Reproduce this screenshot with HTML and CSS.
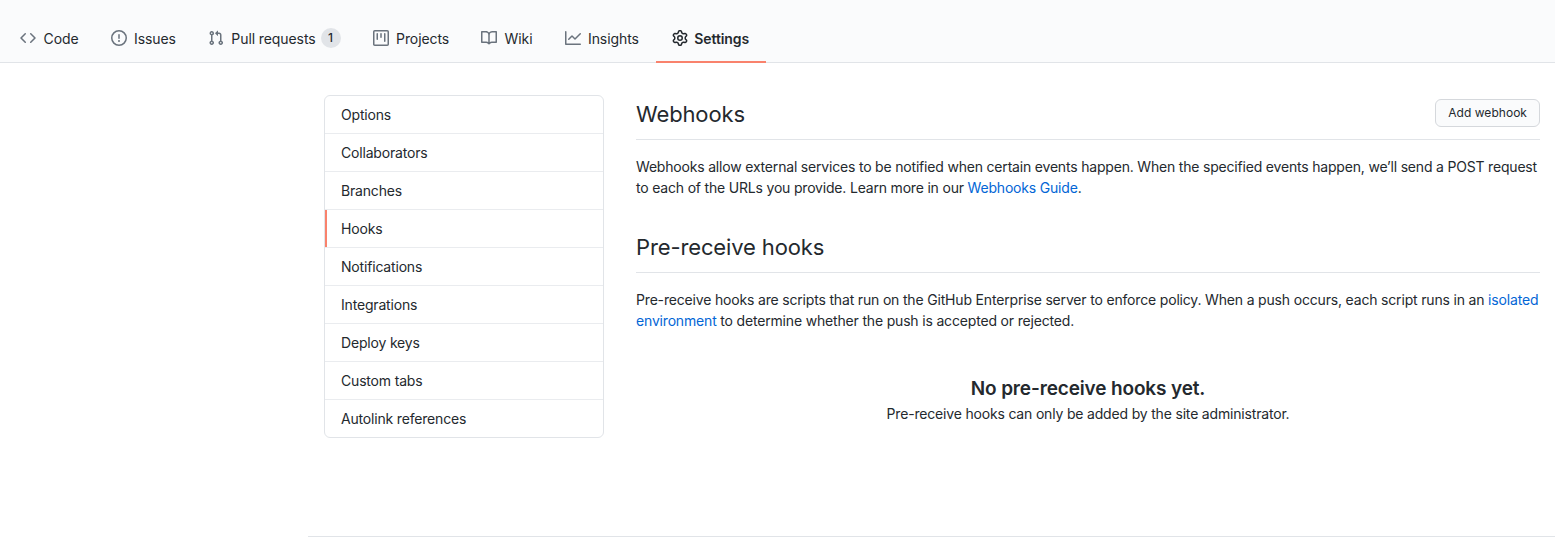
FILE: index.html
```html
<!DOCTYPE html>
<html lang="en">
<head>
<meta charset="utf-8">
<title>Hooks</title>
<link rel="stylesheet" href="styles.css">
</head>
<body>
<nav class="tabs">
  <a class="tab"><svg class="ico" viewBox="0 0 16 16"><path fill-rule="evenodd" d="M4.72 3.22a.75.75 0 011.06 1.06L2.06 8l3.72 3.72a.75.75 0 11-1.06 1.06L.47 8.53a.75.75 0 010-1.06l4.25-4.25zm6.56 0a.75.75 0 10-1.06 1.06L13.94 8l-3.72 3.72a.75.75 0 101.06 1.06l4.25-4.25a.75.75 0 000-1.06l-4.25-4.25z"/></svg>Code</a>
  <a class="tab"><svg class="ico" viewBox="0 0 16 16"><path fill-rule="evenodd" d="M8 1.5a6.5 6.5 0 100 13 6.5 6.5 0 000-13zM0 8a8 8 0 1116 0A8 8 0 010 8zm9 3a1 1 0 11-2 0 1 1 0 012 0zm-.25-6.25a.75.75 0 00-1.5 0v3.5a.75.75 0 001.5 0v-3.5z"/></svg>Issues</a>
  <a class="tab"><svg class="ico" viewBox="0 0 16 16"><path fill-rule="evenodd" d="M7.177 3.073L9.573.677A.25.25 0 0110 .854v4.792a.25.25 0 01-.427.177L7.177 3.427a.25.25 0 010-.354zM3.75 2.5a.75.75 0 100 1.5.75.75 0 000-1.5zm-2.25.75a2.25 2.25 0 113 2.122v5.256a2.251 2.251 0 11-1.5 0V5.372A2.25 2.25 0 011.5 3.25zM11 2.5h-1V4h1a1 1 0 011 1v5.628a2.251 2.251 0 101.5 0V5A2.5 2.5 0 0011 2.5zm1 10.25a.75.75 0 111.5 0 .75.75 0 01-1.5 0zM3.75 12a.75.75 0 100 1.5.75.75 0 000-1.5z"/></svg>Pull requests<span class="counter">1</span></a>
  <a class="tab"><svg class="ico" viewBox="0 0 16 16"><path fill-rule="evenodd" d="M1.75 0A1.75 1.75 0 000 1.75v12.5C0 15.216.784 16 1.75 16h12.5A1.75 1.75 0 0016 14.25V1.75A1.75 1.75 0 0014.25 0H1.75zM1.5 1.75a.25.25 0 01.25-.25h12.5a.25.25 0 01.25.25v12.5a.25.25 0 01-.25.25H1.75a.25.25 0 01-.25-.25V1.75zM11.75 3a.75.75 0 00-.75.75v7.5a.75.75 0 001.5 0v-7.5a.75.75 0 00-.75-.75zm-8.25.75a.75.75 0 011.5 0v5.5a.75.75 0 01-1.5 0v-5.5zM8 3a.75.75 0 00-.75.75v3.5a.75.75 0 001.5 0v-3.5A.75.75 0 008 3z"/></svg>Projects</a>
  <a class="tab"><svg class="ico" viewBox="0 0 16 16"><path fill-rule="evenodd" d="M0 1.75A.75.75 0 01.75 1h4.253c1.227 0 2.317.59 3 1.501A3.744 3.744 0 0111.006 1h4.245a.75.75 0 01.75.75v10.5a.75.75 0 01-.75.75h-4.507a2.25 2.25 0 00-1.591.659l-.622.621a.75.75 0 01-1.06 0l-.622-.621A2.25 2.25 0 005.258 13H.75a.75.75 0 01-.75-.75V1.75zm8.755 3a2.25 2.25 0 012.25-2.25H14.5v9h-3.757c-.71 0-1.4.201-1.992.572l.004-7.322zm-1.504 7.324l.004-5.073-.002-2.253A2.25 2.25 0 005.003 2.5H1.5v9h3.757a3.75 3.75 0 011.994.574z"/></svg>Wiki</a>
  <a class="tab"><svg class="ico" viewBox="0 0 16 16"><path fill-rule="evenodd" d="M1.5 1.75a.75.75 0 00-1.5 0v12.5c0 .414.336.75.75.75h14.5a.75.75 0 000-1.5H1.5V1.75zm14.28 2.53a.75.75 0 00-1.06-1.06L10 7.94 7.53 5.47a.75.75 0 00-1.06 0L3.22 8.72a.75.75 0 001.06 1.06L7 7.06l2.47 2.47a.75.75 0 001.06 0l5.25-5.25z"/></svg>Insights</a>
  <a class="tab tab-active"><svg class="ico" viewBox="0 0 16 16"><path fill-rule="evenodd" d="M7.429 1.525a6.593 6.593 0 011.142 0c.036.003.108.036.137.146l.289 1.105c.147.56.55.967.997 1.189.174.086.341.183.501.29.417.278.97.423 1.53.27l1.102-.303c.11-.03.175.016.195.046.219.31.41.641.573.989.014.031.022.11-.059.19l-.815.806c-.411.406-.562.957-.53 1.456a4.588 4.588 0 010 .582c-.032.499.119 1.05.53 1.456l.815.806c.08.08.073.159.059.19a6.494 6.494 0 01-.573.99c-.02.029-.086.074-.195.045l-1.103-.303c-.559-.153-1.112-.008-1.529.27-.16.107-.327.204-.5.29-.449.222-.851.628-.998 1.189l-.289 1.105c-.029.11-.101.143-.137.146a6.613 6.613 0 01-1.142 0c-.036-.003-.108-.037-.137-.146l-.289-1.105c-.147-.56-.55-.967-.997-1.189a4.502 4.502 0 01-.501-.29c-.417-.278-.97-.423-1.53-.27l-1.102.303c-.11.03-.175-.016-.195-.046a6.492 6.492 0 01-.573-.989c-.014-.031-.022-.11.059-.19l.815-.806c.411-.406.562-.957.53-1.456a4.587 4.587 0 010-.582c-.032-.499-.119-1.05-.53-1.456l-.815-.806c-.08-.08-.073-.159-.059-.19a6.44 6.44 0 01.573-.99c.02-.029.086-.075.195-.045l1.103.303c.559.153 1.112.008 1.529-.27.16-.107.327-.204.5-.29.449-.222.851-.628.998-1.189l.289-1.105c.029-.11.101-.143.137-.146zM8 0c-.236 0-.47.01-.701.03-.743.065-1.29.615-1.458 1.261l-.29 1.106c-.017.066-.078.158-.211.224a5.994 5.994 0 00-.668.386c-.123.082-.233.09-.3.071L3.27 2.776c-.644-.177-1.392.02-1.82.63a7.977 7.977 0 00-.704 1.217c-.315.675-.111 1.422.363 1.891l.815.806c.05.048.098.147.088.294a6.084 6.084 0 000 .772c.01.147-.038.246-.088.294l-.815.806c-.474.469-.678 1.216-.363 1.891.2.428.436.835.704 1.218.428.609 1.176.806 1.82.63l1.103-.303c.066-.019.176-.011.299.071.213.143.436.272.668.386.133.066.194.158.212.224l.289 1.106c.169.646.715 1.196 1.458 1.26a8.094 8.094 0 001.402 0c.743-.064 1.29-.614 1.458-1.26l.29-1.106c.017-.066.078-.158.211-.224a5.98 5.98 0 00.668-.386c.123-.082.233-.09.3-.071l1.102.302c.644.177 1.392-.02 1.82-.63.268-.382.505-.789.704-1.217.315-.675.111-1.422-.364-1.891l-.814-.806c-.05-.048-.098-.147-.088-.294a6.1 6.1 0 000-.772c-.01-.147.039-.246.088-.294l.814-.806c.475-.469.679-1.216.364-1.891a7.992 7.992 0 00-.704-1.218c-.428-.609-1.176-.806-1.82-.63l-1.103.303c-.066.019-.176.011-.299-.071a5.991 5.991 0 00-.668-.386c-.133-.066-.194-.158-.212-.224L10.16 1.29C9.99.645 9.444.095 8.701.031A8.094 8.094 0 008 0zm1.5 8a1.5 1.5 0 11-3 0 1.5 1.5 0 013 0zM11 8a3 3 0 11-6 0 3 3 0 016 0z"/></svg>Settings</a>
</nav>
<div class="page">
  <div class="layout">
    <aside class="menu">
      <a class="menu-item">Options</a>
      <a class="menu-item">Collaborators</a>
      <a class="menu-item">Branches</a>
      <a class="menu-item menu-item-active">Hooks</a>
      <a class="menu-item">Notifications</a>
      <a class="menu-item">Integrations</a>
      <a class="menu-item">Deploy keys</a>
      <a class="menu-item">Custom tabs</a>
      <a class="menu-item">Autolink references</a>
    </aside>
    <main class="content">
      <div class="subhead">
        <h2 class="subhead-title">Webhooks</h2>
        <button class="btn">Add webhook</button>
      </div>
      <p class="copy">Webhooks allow external services to be notified when certain events happen. When the specified events happen, we’ll send a POST request to each of the URLs you provide. Learn more in our <a class="link">Webhooks Guide</a>.</p>
      <div class="subhead subhead-second">
        <h2 class="subhead-title">Pre-receive hooks</h2>
      </div>
      <p class="copy copy-wide">Pre-receive hooks are scripts that run on the GitHub Enterprise server to enforce policy. When a push occurs, each script runs in an <a class="link">isolated environment</a> to determine whether the push is accepted or rejected.</p>
      <div class="blank">
        <h3 class="blank-title">No pre-receive hooks yet.</h3>
        <p class="blank-text">Pre-receive hooks can only be added by the site administrator.</p>
      </div>
    </main>
  </div>
  <footer class="foot"></footer>
</div>
</body>
</html>
```
FILE: styles.css
```css
* { box-sizing: border-box; }
html, body { margin: 0; height: 537px; overflow: hidden; }
body {
  font-family: Inter, "Liberation Sans", sans-serif;
  font-size: 14px;
  line-height: 21px;
  color: #24292e;
  background: #fff;
}
.tabs {
  display: flex;
  height: 63px;
  padding-left: 4px;
  background: #fafbfc;
  border-bottom: 1px solid #e1e4e8;
}
.tab {
  display: flex;
  align-items: center;
  height: 63px;
  padding: 15px 16px 0;
  color: #24292e;
  letter-spacing: -0.09px;
  border-bottom: 2px solid transparent;
  white-space: nowrap;
}
.ico { width: 16px; height: 16px; margin-right: 7.5px; fill: #6a737d; flex: none; }
.tab-active { margin-left: 1px; padding-right: 17px; font-weight: 600; border-bottom-color: #f9826c; }
.tab-active .ico { fill: #24292e; margin-right: 6.5px; }
.counter {
  display: inline-block;
  min-width: 20px;
  margin-left: 5px;
  padding: 0 6px;
  font-size: 12px;
  font-weight: 500;
  line-height: 20px;
  text-align: center;
  background: #e1e4e8;
  border-radius: 10px;
}
.page { margin-left: 308px; height: 474px; display: flex; flex-direction: column; justify-content: space-between; }
.layout { display: flex; gap: 32px; padding: 32px 15px 0 16px; }
.menu {
  width: 280px;
  flex: none;
  border: 1px solid #e1e4e8;
  border-radius: 6px;
  overflow: hidden;
  align-self: flex-start;
}
.menu-item {
  display: block;
  height: 38px;
  padding: 8px 16px;
  border-top: 1px solid #eaecef;
  color: #24292e;
  letter-spacing: -0.18px;
}
.menu-item:first-child { height: 37px; border-top: 0; }
.menu-item-active { box-shadow: inset 2px 0 0 #f9826c; }
.content { flex: 1; min-width: 0; }
.subhead {
  display: flex;
  justify-content: space-between;
  align-items: center;
  height: 45px;
  padding-bottom: 6px;
  border-bottom: 1px solid #e1e4e8;
  margin-bottom: 16px;
}
.subhead-second { margin-top: 30px; }
.subhead-title { margin: 0; font-size: 22px; font-weight: 400; line-height: 36px; letter-spacing: -0.13px; }
.btn {
  font: 400 12px/20px Inter, "Liberation Sans", sans-serif;
  letter-spacing: 0.04px;
  color: #24292e;
  height: 28px;
  padding: 3px 12px;
  background: #fafbfc;
  border: 1px solid #d5d8dc;
  border-radius: 6px;
  margin-top: -2px;
}
.copy { margin: 0; letter-spacing: -0.19px; }
.copy-wide { letter-spacing: -0.175px; }
.link { color: #0366d6; }
.blank { padding-top: 43px; text-align: center; letter-spacing: -0.18px; }
.blank-title { margin: 0; font-size: 19px; font-weight: 600; line-height: 30px; letter-spacing: -0.14px; }
.blank-text { margin: -1px 0 0; }
.foot { border-top: 1px solid #e1e4e8; height: 1px; }
```
